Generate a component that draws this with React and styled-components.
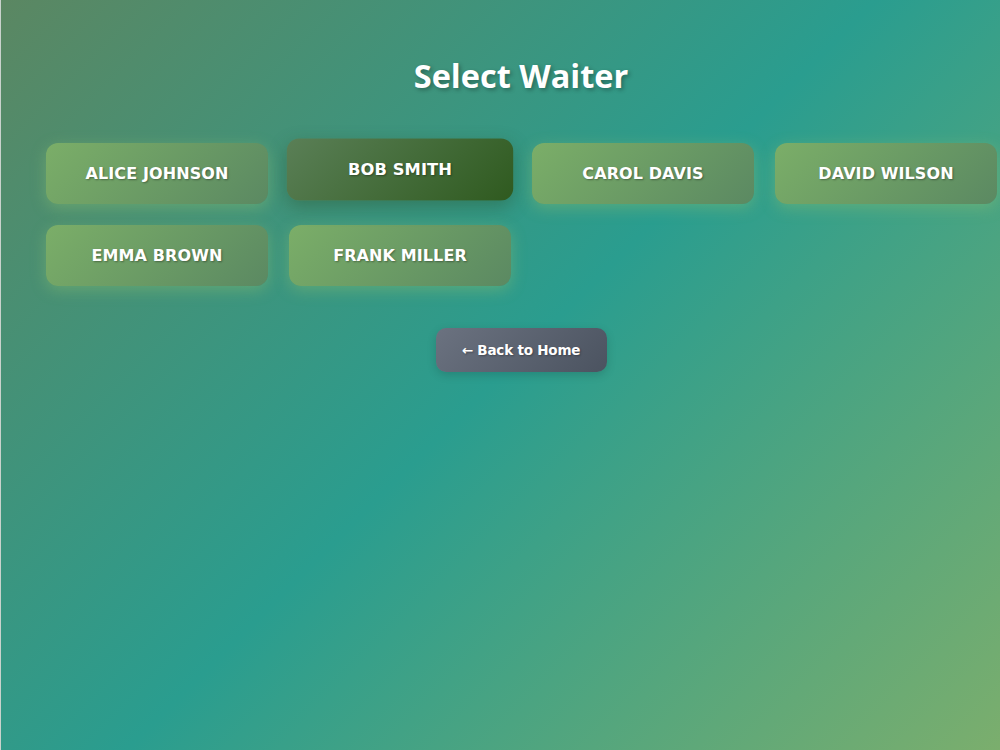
import React, { useState } from "react";
import styled, { createGlobalStyle } from "styled-components";

const GlobalStyle = createGlobalStyle`
  html, body { margin: 0; padding: 0; }
  body {
    font-family: "DejaVu Sans", Verdana, sans-serif;
    min-height: 750px;
  }
  #root { min-height: 750px; }
`;

const Page = styled.div`
  min-height: 750px;
  box-sizing: border-box;
  border-left: 1px solid #c9d2cc;
  background: linear-gradient(135deg, #5b8762 0%, #2a9d8f 50%, #7bae6d 100%);
  padding: 53px 0 0 45px;
`;

const Container = styled.div`
  width: 950px;
  display: flex;
  flex-direction: column;
  align-items: center;
`;

const Title = styled.h1`
  margin: 0 0 45px;
  font-family: "Open Sans", "Noto Sans", sans-serif;
  font-weight: 700;
  font-size: 32.5px;
  line-height: 45px;
  color: #ffffff;
  text-shadow: 2px 2px 4px rgba(0, 0, 0, 0.3);
`;

const Grid = styled.div`
  align-self: stretch;
  display: grid;
  grid-template-columns: repeat(4, 222px);
  gap: 21px;
`;

const WaiterButton = styled.button`
  height: 61px;
  border: none;
  border-radius: 12px;
  cursor: pointer;
  font-family: "DejaVu Sans", Verdana, sans-serif;
  font-weight: 700;
  font-size: 16px;
  letter-spacing: 0.1px;
  text-transform: uppercase;
  color: #ffffff;
  text-shadow: 1px 1px 2px rgba(0, 0, 0, 0.35);
  background: ${(p) =>
    p.$active
      ? "linear-gradient(135deg, #5a7f56 0%, #2f5a1f 100%)"
      : "linear-gradient(135deg, #7bae68 0%, #5b8962 100%)"};
  box-shadow: ${(p) =>
    p.$active
      ? "0 6px 18px rgba(40, 70, 30, 0.35)"
      : "0 4px 15px rgba(140, 190, 110, 0.45)"};
  transform: ${(p) => (p.$active ? "translateY(-4px) scale(1.02)" : "none")};
`;

const BackButton = styled.button`
  margin-top: 42px;
  width: 171px;
  height: 44px;
  border: none;
  border-radius: 10px;
  cursor: pointer;
  font-family: "DejaVu Sans", Verdana, sans-serif;
  font-weight: 700;
  font-size: 13.5px;
  letter-spacing: -0.2px;
  color: #ffffff;
  text-shadow: 1px 1px 2px rgba(0, 0, 0, 0.3);
  background: linear-gradient(135deg, #6b7280 0%, #4b5360 100%);
  box-shadow: 0 3px 10px rgba(0, 0, 0, 0.15);
`;

const waiters = [
  "Alice Johnson",
  "Bob Smith",
  "Carol Davis",
  "David Wilson",
  "Emma Brown",
  "Frank Miller",
];

export default function App() {
  const [selected, setSelected] = useState("Bob Smith");
  return (
    <>
      <GlobalStyle />
      <Page>
        <Container>
          <Title>Select Waiter</Title>
          <Grid>
            {waiters.map((w) => (
              <WaiterButton
                key={w}
                $active={w === selected}
                onClick={() => setSelected(w)}
              >
                {w}
              </WaiterButton>
            ))}
          </Grid>
          <BackButton>← Back to Home</BackButton>
        </Container>
      </Page>
    </>
  );
}
